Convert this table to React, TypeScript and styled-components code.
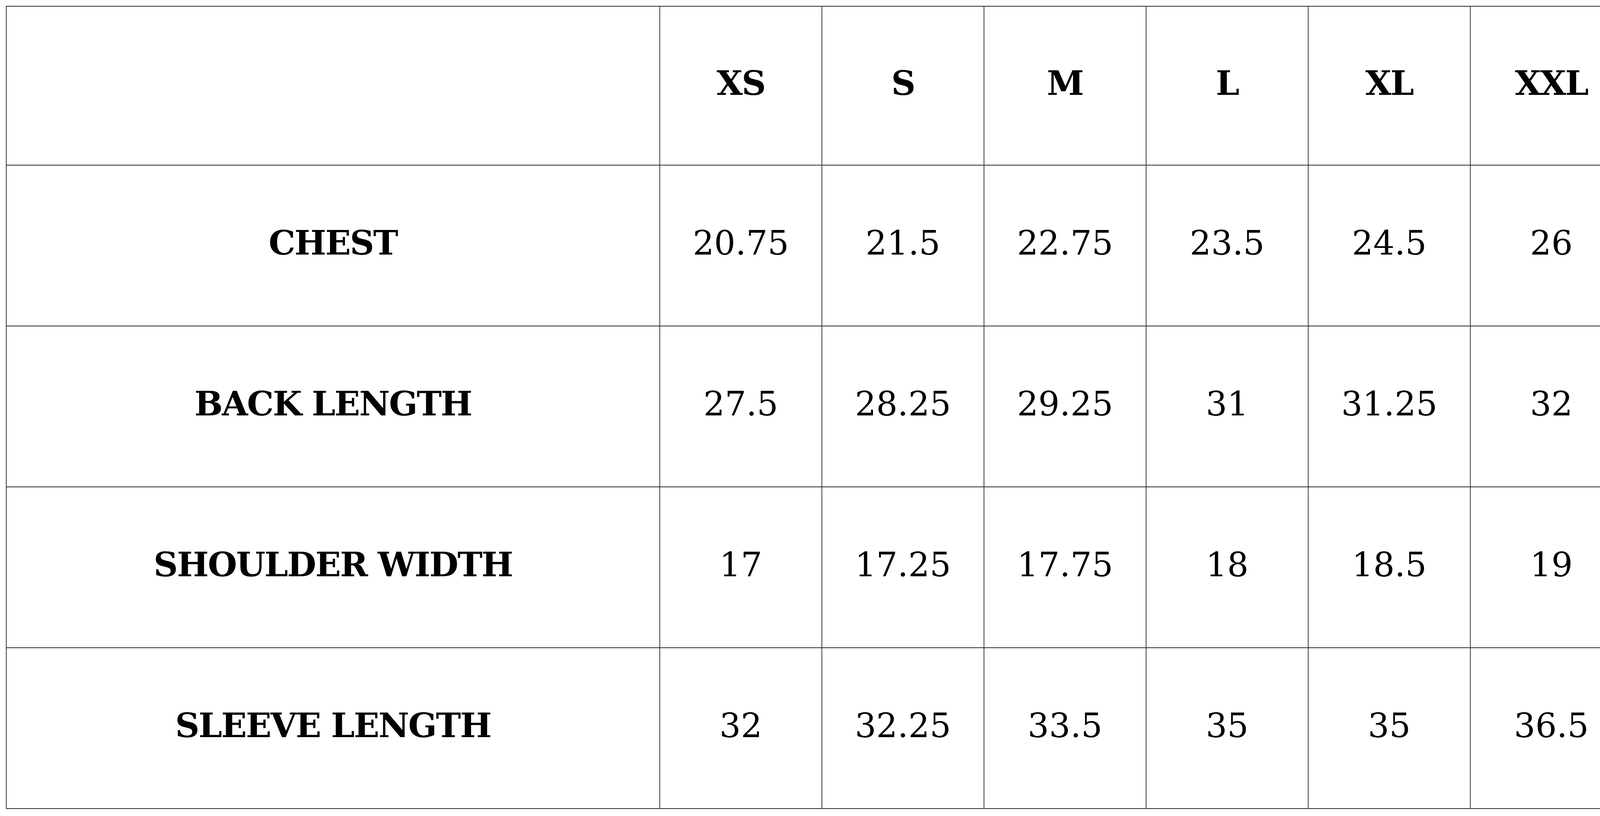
import React from "react";
import styled, { createGlobalStyle } from "styled-components";

const sizes = ["XS", "S", "M", "L", "XL", "XXL"];

const rows: { label: string; values: string[] }[] = [
  { label: "CHEST", values: ["20.75", "21.5", "22.75", "23.5", "24.5", "26"] },
  { label: "BACK LENGTH", values: ["27.5", "28.25", "29.25", "31", "31.25", "32"] },
  { label: "SHOULDER WIDTH", values: ["17", "17.25", "17.75", "18", "18.5", "19"] },
  { label: "SLEEVE LENGTH", values: ["32", "32.25", "33.5", "35", "35", "36.5"] },
];

const GlobalStyle = createGlobalStyle`
  html, body {
    margin: 0;
    padding: 0;
    background: #fff;
  }
  body {
    font-family: "DejaVu Serif", "Liberation Serif", serif;
    color: #000;
  }
`;

const Page = styled.div`
  padding: 15px 17px 0 15px;
`;

const Table = styled.table`
  border-collapse: collapse;
  table-layout: fixed;
  width: 4164px;
`;

const Row = styled.tr<{ $header?: boolean }>`
  height: ${(p) => (p.$header ? "407px" : "412px")};
`;

const Cell = styled.td<{ $bold?: boolean }>`
  border-top: 2px solid #2a2a2a;
  border-bottom: 2px solid #2a2a2a;
  border-left: 2px solid #3a3a3a;
  border-right: 2px solid #3a3a3a;
  padding: 0 0 14px;
  text-align: center;
  vertical-align: middle;
  font-size: 86px;
  line-height: 1;
  font-weight: ${(p) => (p.$bold ? 700 : 400)};
  letter-spacing: ${(p) => (p.$bold ? "-2.4px" : "0")};
  white-space: nowrap;
`;

export default function App() {
  return (
    <Page>
      <GlobalStyle />
      <Table>
        <colgroup>
          <col style={{ width: 1673 }} />
          {sizes.map((s) => (
            <col key={s} style={{ width: 415 }} />
          ))}
        </colgroup>
        <tbody>
          <Row $header>
            <Cell />
            {sizes.map((s) => (
              <Cell key={s} $bold>
                {s}
              </Cell>
            ))}
          </Row>
          {rows.map((r) => (
            <Row key={r.label}>
              <Cell $bold>{r.label}</Cell>
              {r.values.map((v, i) => (
                <Cell key={i}>{v}</Cell>
              ))}
            </Row>
          ))}
        </tbody>
      </Table>
    </Page>
  );
}
